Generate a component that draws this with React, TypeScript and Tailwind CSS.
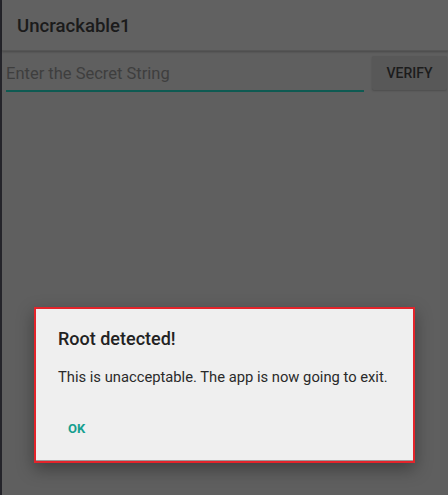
export default function App() {
  return (
    <div
      className="relative flex h-[495px] w-[448px] overflow-hidden bg-[#5f5f5f]"
      style={{ fontFamily: 'Roboto, "Noto Sans", sans-serif' }}
    >
      <div className="h-full w-[2px] shrink-0 bg-[#24242a]" />
      <div className="flex flex-1 flex-col">
        <div className="flex h-[51px] items-center border-b border-[#555555] bg-[#616161] pl-[15px] pt-[4px] shadow-[0_1px_2px_rgba(0,0,0,0.25)]">
          <span className="text-[18.6px] font-medium text-[#1b1b1b]">Uncrackable1</span>
        </div>
        <div className="flex items-start gap-[8px] pt-[5px] pl-[4px] pr-[1px]">
          <div className="flex h-[36px] flex-1 flex-col justify-end">
            <div className="h-[28px] text-[16.5px] leading-[28px] text-[#3e3e3e]">Enter the Secret String</div>
            <div className="mt-[2px] h-[2px] bg-[#0e5a52]" />
          </div>
          <div className="flex h-[34px] w-[75px] items-center justify-center rounded-[2px] bg-[#585858] shadow-[0_1px_2px_rgba(0,0,0,0.2)]">
            <span className="text-[14px] font-medium text-[#1c1c1c]">VERIFY</span>
          </div>
        </div>
      </div>
      <div className="absolute left-[34px] top-[307px] flex h-[156px] w-[381px] flex-col border-2 border-[#e3242b] bg-[#efefef] shadow-[0_6px_16px_rgba(0,0,0,0.35)]">
        <div className="flex flex-1 flex-col border-b border-[#9a9a9a] pl-[22px]">
          <div className="mt-[18px] text-[18px] font-medium leading-[24px] text-[#222222]">Root detected!</div>
          <div className="mt-[16px] text-[14.75px] leading-[20px] text-[#2a2a2a]">
            This is unacceptable. The app is now going to exit.
          </div>
          <div className="mt-[32px] pl-[10px] text-[13px] font-bold text-[#169f8f]">OK</div>
        </div>
      </div>
    </div>
  );
}
